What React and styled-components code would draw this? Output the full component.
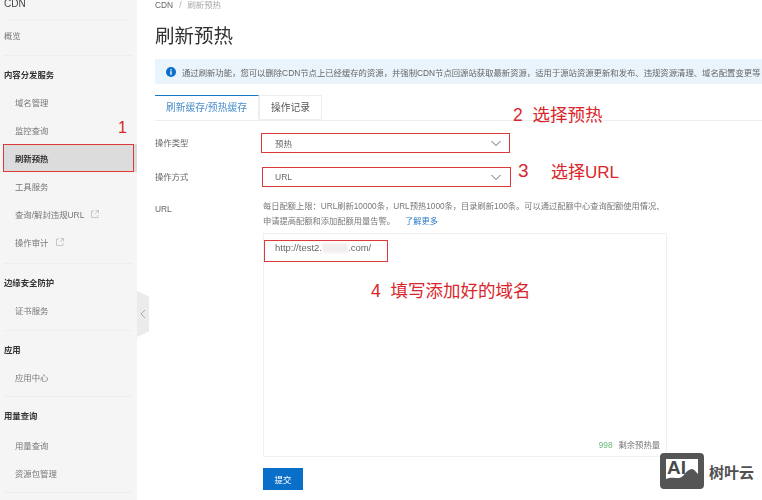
import React from 'react';
import styled, { createGlobalStyle } from 'styled-components';

const Global = createGlobalStyle`
  html, body { margin: 0; padding: 0; background: #fff; }
  body { font-family: "Liberation Sans", "Noto Sans CJK SC", sans-serif; }
`;

const Page = styled.div`
  position: relative;
  display: flex;
  width: 762px;
  height: 500px;
  overflow: hidden;
  color: #555;
`;

const Sidebar = styled.aside`
  flex: 0 0 137px;
  height: 500px;
  background: #f5f5f5;
  padding: 0 5px 0 4px;
  box-sizing: border-box;
  filter: blur(0.35px);
`;

const SideTitle = styled.div`
  height: 20px;
  line-height: 8px;
  font-size: 10px;
  color: #444;
  border-bottom: 1px solid #f0f0f0;
  box-sizing: border-box;
`;

const Group = styled.div`
  padding: ${p => (p.$tight ? '1px' : '6px')} 0 ${p => p.$pb ?? 6}px;
  border-bottom: 1px solid #eeeeee;
`;

const GroupName = styled.div`
  height: ${p => p.$h ?? 26}px;
  line-height: 27px;
  font-size: 8.4px;
  font-weight: 700;
  color: #333;
`;

const Item = styled.div`
  display: flex;
  align-items: center;
  gap: 7px;
  height: 28px;
  padding-left: ${p => (p.$flat ? '0' : '11px')};
  font-size: 8.4px;
  color: ${p => (p.$active ? '#333' : '#777')};
  font-weight: ${p => (p.$active ? 700 : 400)};
  background: ${p => (p.$active ? '#dcdcdc' : 'transparent')};
  margin-right: ${p => (p.$active ? '-5px' : '0')};
`;

const Handle = styled.div`
  position: absolute;
  left: 137px;
  top: 291px;
  width: 12px;
  height: 46px;
  background: #ebebeb;
  clip-path: polygon(0 0, 100% 12%, 100% 88%, 0 100%);
  display: flex;
  align-items: center;
  justify-content: center;
`;

const Main = styled.main`
  flex: 1;
  min-width: 0;
  padding-left: 18px;
  filter: blur(0.35px);
`;

const Crumb = styled.div`
  height: 11px;
  line-height: 11px;
  font-size: 8.4px;
  color: #666;
  & span { color: #aaa; margin-left: 6px; }
  & b { font-weight: 400; margin-left: 6px; color: #aaa; }
`;

const Title = styled.h1`
  margin: 13px 0 0;
  height: 25px;
  line-height: 25px;
  font-size: 19.5px;
  font-weight: 400;
  color: #333;
`;

const Alert = styled.div`
  display: flex;
  align-items: center;
  gap: 6px;
  margin: 10px 0 0;
  height: 25px;
  padding-left: 11px;
  background: #e9f4fc;
  font-size: 8.35px;
  color: #666;
  white-space: nowrap;
  overflow: hidden;
  & svg { flex: none; }
`;

const Tabs = styled.div`
  display: flex;
  margin: 11px 0 0;
  height: 25px;
  border-bottom: 1px solid #eeeeee;
`;

const Tab = styled.div`
  box-sizing: border-box;
  height: 25px;
  width: ${p => p.$w}px;
  line-height: 24px;
  text-align: center;
  font-size: 9.8px;
  color: ${p => (p.$active ? '#4a8fcc' : '#555')};
  background: #fff;
  border: 1px solid #eeeeee;
  border-left-width: ${p => (p.$active ? '0' : '1px')};
  border-top: ${p => (p.$active ? '1.5px solid #1678c8' : '1px solid #eeeeee')};
  border-bottom: ${p => (p.$active ? '1px solid #fff' : '1px solid #eeeeee')};
`;

const Row = styled.div`
  display: flex;
  margin-top: ${p => p.$top}px;
`;

const Label = styled.div`
  flex: 0 0 108px;
  height: 21px;
  line-height: 21px;
  font-size: 8.4px;
  color: #666;
`;

const Select = styled.div`
  display: flex;
  align-items: center;
  justify-content: space-between;
  box-sizing: border-box;
  width: 245px;
  height: 20px;
  padding: 0 6px 0 12px;
  font-size: 8.5px;
  color: #666;
`;

const Field = styled.div`
  width: 404px;
`;

const Help = styled.p`
  margin: 0;
  font-size: 8.25px;
  line-height: 15px;
  color: #777;
  white-space: nowrap;
  & a { color: #2a7cc7; margin-left: 10px; }
`;

const UrlBox = styled.div`
  position: relative;
  box-sizing: border-box;
  height: 224px;
  margin-top: 4px;
  padding: 8px 11px;
  border: 1px solid #f0f0f0;
  font-size: 9.5px;
  color: #666;
`;

const Smudge = styled.span`
  display: inline-block;
  width: 26px;
  height: 10px;
  vertical-align: middle;
  background: #f3eeee;
  filter: blur(1.5px);
`;

const Count = styled.div`
  position: absolute;
  right: 6px;
  bottom: 6px;
  font-size: 8.3px;
  color: #777;
  & em { font-style: normal; color: #6cb87c; margin-right: 6px; }
`;

const Submit = styled.button`
  display: block;
  width: 40px;
  height: 22px;
  margin: 11px 0 0 108px;
  border: 0;
  padding: 0;
  background: #0a6fc9;
  color: #fff;
  font: inherit;
  font-size: 8.5px;
`;

const RedBox = styled.div`
  position: absolute;
  box-sizing: border-box;
  border: 1.5px solid #dc3a3a;
  left: ${p => p.$x}px;
  top: ${p => p.$y}px;
  width: ${p => p.$w}px;
  height: ${p => p.$h}px;
`;

const Note = styled.div`
  position: absolute;
  left: ${p => p.$x}px;
  top: ${p => p.$y}px;
  font-size: ${p => p.$size || 17.5}px;
  line-height: 20px;
  color: #d9262b;
  white-space: nowrap;
`;

const Mark = styled.div`
  position: absolute;
  left: 660px;
  top: 453px;
  display: flex;
  align-items: center;
  gap: 5px;
`;

const MarkBadge = styled.div`
  position: relative;
  box-sizing: border-box;
  width: 44px;
  height: 36px;
  border: 6px solid #555;
  border-bottom-width: 4px;
  border-radius: 4px;
  background: #fff;
  overflow: hidden;
  & svg { position: absolute; left: 0; bottom: 0; }
`;

const MarkAI = styled.span`
  position: absolute;
  left: 1px;
  top: -1px;
  font-size: 19px;
  line-height: 19px;
  font-weight: 700;
  color: #4a4a4a;
`;

const MarkText = styled.span`
  font-size: 15px;
  font-weight: 700;
  color: #505050;
`;

const Chevron = () => (
  <svg width="12" height="12" viewBox="0 0 12 12" fill="none" stroke="#666" strokeWidth="1">
    <path d="M1.5 4l4.5 4.5L10.5 4" />
  </svg>
);

const Ext = () => (
  <svg width="8" height="8" viewBox="0 0 8 8" fill="none" stroke="#bbb" strokeWidth="0.8">
    <path d="M3 1H.5v6.5H7V5M4.5.5h3v3M7.5.5L4 4" />
  </svg>
);

export default function App() {
  return (
    <Page>
      <Global />
      <Sidebar>
        <SideTitle>CDN</SideTitle>
        <Group $tight>
          <Item $flat>概览</Item>
        </Group>
        <Group $pb={7}>
          <GroupName>内容分发服务</GroupName>
          <Item>域名管理</Item>
          <Item>监控查询</Item>
          <Item $active>刷新预热</Item>
          <Item>工具服务</Item>
          <Item>查询/解封违规URL <Ext /></Item>
          <Item>操作审计 <Ext /></Item>
        </Group>
        <Group>
          <GroupName>边缘安全防护</GroupName>
          <Item>证书服务</Item>
        </Group>
        <Group $pb={5}>
          <GroupName>应用</GroupName>
          <Item>应用中心</Item>
        </Group>
        <Group $pb={5}>
          <GroupName $h={28}>用量查询</GroupName>
          <Item>用量查询</Item>
          <Item>资源包管理</Item>
        </Group>
      </Sidebar>
      <Handle>
        <svg width="6" height="10" viewBox="0 0 6 10" fill="none" stroke="#aaa" strokeWidth="1">
          <path d="M5 1L1 5l4 4" />
        </svg>
      </Handle>
      <Main>
        <Crumb>
          CDN<span>/</span><b>刷新预热</b>
        </Crumb>
        <Title>刷新预热</Title>
        <Alert>
          <svg width="10" height="10" viewBox="0 0 10 10">
            <circle cx="5" cy="5" r="5" fill="#0a6fc9" />
            <rect x="4.3" y="4.2" width="1.4" height="3.6" fill="#fff" />
            <rect x="4.3" y="2.2" width="1.4" height="1.3" fill="#fff" />
          </svg>
          通过刷新功能，您可以删除CDN节点上已经缓存的资源，并强制CDN节点回源站获取最新资源，适用于源站资源更新和发布、违规资源清理、域名配置变更等
        </Alert>
        <Tabs>
          <Tab $active $w={104}>刷新缓存/预热缓存</Tab>
          <Tab $w={63}>操作记录</Tab>
        </Tabs>
        <Row $top={12}>
          <Label>操作类型</Label>
          <Select>预热<Chevron /></Select>
        </Row>
        <Row $top={13}>
          <Label>操作方式</Label>
          <Select>URL<Chevron /></Select>
        </Row>
        <Row $top={11}>
          <Label>URL</Label>
          <Field>
            <Help>
              每日配额上限：URL刷新10000条，URL预热1000条，目录刷新100条。可以通过配额中心查询配额使用情况、
              <br />
              申请提高配额和添加配额用量告警。
              <a>了解更多</a>
            </Help>
            <UrlBox>
              http://test2.<Smudge />.com/
              <Count><em>998</em>剩余预热量</Count>
            </UrlBox>
          </Field>
        </Row>
        <Submit>提交</Submit>
      </Main>

      <RedBox $x={3} $y={144} $w={131} $h={28} />
      <RedBox $x={261} $y={133} $w={249} $h={20} />
      <RedBox $x={262} $y={167} $w={249} $h={20} />
      <RedBox $x={264} $y={240} $w={124} $h={22} />

      <Note $x={118} $y={118} $size={16}>1</Note>
      <Note $x={513} $y={105}>2&nbsp;&nbsp;选择预热</Note>
      <Note $x={518} $y={161} $size={19}>3</Note>
      <Note $x={551} $y={163} $size={17}>选择URL</Note>
      <Note $x={371} $y={281}>4&nbsp;&nbsp;填写添加好的域名</Note>

      <Mark>
        <MarkBadge>
          <MarkAI>AI</MarkAI>
          <svg width="32" height="26" viewBox="0 0 32 26">
            <path d="M0 26V20c4-2 9-1 13-1 5 0 7-9 13-9 2 0 4 3 6 5v11z" fill="#555" />
          </svg>
        </MarkBadge>
        <MarkText>树叶云</MarkText>
      </Mark>
    </Page>
  );
}
